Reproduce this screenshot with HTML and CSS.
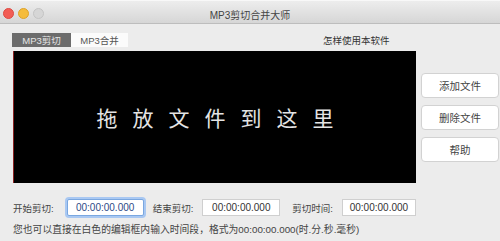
FILE: index.html
```html
<!DOCTYPE html>
<html lang="zh-CN">
  <head>
    <meta charset="UTF-8">
    <title>MP3剪切合并大师</title>
    <link rel="stylesheet" href="styles.css">
  </head>
  <body>

<div class="window">
  <div class="titlebar">
    <span class="light red"></span>
    <span class="light yellow"></span>
    <span class="light off"></span>
    <span class="title">MP3剪切合并大师</span>
  </div>

  <div class="toolbar">
    <span class="tab active">MP3剪切</span>
    <span class="tab">MP3合并</span>
    <span class="help-link">怎样使用本软件</span>
  </div>

  <div class="main">
    <div class="drop">拖放文件到这里</div>
    <div class="side">
      <button class="btn">添加文件</button>
      <button class="btn">删除文件</button>
      <button class="btn">帮助</button>
    </div>
  </div>

  <div class="times">
    <label class="lbl">开始剪切:</label>
    <input class="time focus" type="text" value="00:00:00.000">
    <label class="lbl end">结束剪切:</label>
    <input class="time" type="text" value="00:00:00.000">
    <label class="lbl len">剪切时间:</label>
    <input class="time short" type="text" value="00:00:00.000">
  </div>

  <p class="note">您也可以直接在白色的编辑框内输入时间段，格式为00:00:00.000(时.分.秒.毫秒)</p>
</div>

  </body>
</html>
```

FILE: styles.css
```css
*, ::before, ::after { box-sizing: border-box; }
html, body { margin: 0; }
body {
  width: 500px;
  height: 241px;
  overflow: hidden;
  font-family: "Liberation Sans", "Noto Sans CJK SC", sans-serif;
  background: #ececec;
  color: #333;
}

.window { height: 241px; }

.titlebar {
  position: relative;
  display: flex;
  align-items: center;
  gap: 4px;
  height: 24px;
  padding: 2px 0 0 3px;
  background: linear-gradient(#ededed, #d6d6d6);
  border-top: 1px solid #f8f8f8;
  border-bottom: 1px solid #bdbdbd;
}
.light {
  width: 11px;
  height: 11px;
  border-radius: 50%;
}
.light.red { background: #f25d55; border: 1px solid #de4a42; }
.light.yellow { background: #f5bc3c; border: 1px solid #dea32a; }
.light.off { background: #d6d6d6; border: 1px solid #c4c4c4; }
.title {
  position: absolute;
  left: 0;
  right: 0;
  top: 6px;
  text-align: center;
  font-size: 10px;
  color: #444;
  pointer-events: none;
}

.toolbar {
  display: flex;
  align-items: center;
  height: 14px;
  margin: 9px 0 0 12px;
}
.tab {
  display: flex;
  align-items: center;
  justify-content: center;
  height: 14px;
  width: 57px;
  font-size: 9.5px;
  background: #fbfbfb;
  color: #555;
}
.tab.active {
  width: 59px;
  background: #6c6c6c;
  color: #e6e6e6;
}
.help-link {
  margin-left: 195px;
  font-size: 9.5px;
  color: #333;
}

.main {
  display: flex;
  margin: 4px 0 0 13px;
}
.drop {
  display: flex;
  align-items: center;
  justify-content: center;
  width: 403px;
  height: 132px;
  background: #000;
  border-left: 1px solid #8a2222;
  color: #e4e4e4;
  font-size: 21px;
  letter-spacing: 15px;
  padding-left: 15px;
}
.side {
  display: flex;
  flex-direction: column;
  gap: 7px;
  margin: 22px 0 0 5px;
}
.btn {
  width: 78px;
  height: 25px;
  border: 1px solid #d2d2d2;
  border-radius: 4px;
  background: #fff;
  font-family: inherit;
  font-size: 10.5px;
  color: #444;
  padding: 0;
}

.times {
  display: flex;
  align-items: center;
  margin: 16px 0 0 13px;
}
.lbl {
  font-size: 9.5px;
  color: #444;
  margin-right: 13px;
}
.lbl.end { margin: 0 9px 0 9px; }
.lbl.len { margin: 0 9px 0 12px; }
.time {
  width: 78px;
  height: 17px;
  border: 1px solid #cfcfcf;
  background: #fff;
  font-family: inherit;
  font-size: 10px;
  color: #333;
  text-align: center;
  padding: 0;
}
.time.focus {
  width: 77px;
  border: 1px solid #7aa7e0;
  box-shadow: 0 0 0 2px #a9c8f2;
  border-radius: 2px;
  color: #2d4a86;
}
.time.short { width: 74px; }

.note {
  margin: 6px 0 0 13px;
  font-size: 9.8px;
  color: #444;
  white-space: nowrap;
}
```
